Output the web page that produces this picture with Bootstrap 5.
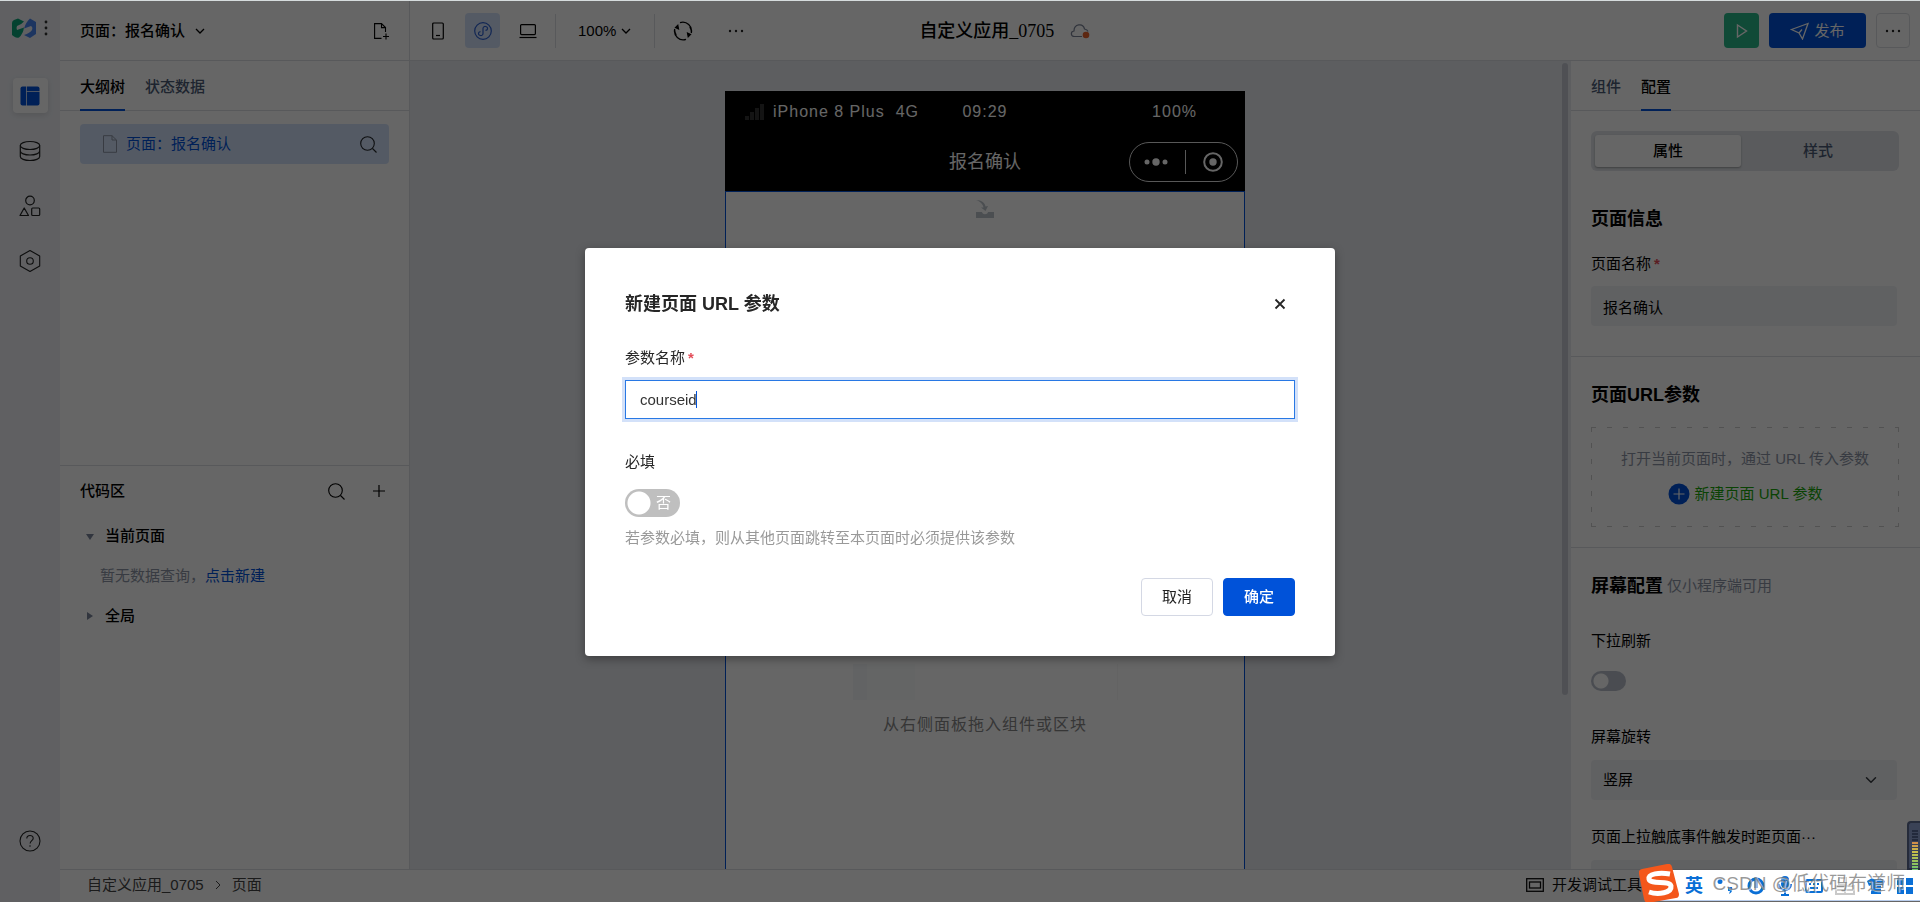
<!DOCTYPE html>
<html lang="zh-CN">
<head>
<meta charset="utf-8">
<meta name="viewport" content="width=device-width, initial-scale=1">
<title>自定义应用_0705</title>
<link href="https://cdn.jsdelivr.net/npm/bootstrap@5.3.0/dist/css/bootstrap.min.css" rel="stylesheet">
<style>
  :root { --brand:#0052d9; --line:#dcdfe4; --canvas:#e9ecf0; --tint:#d3e2fa; --muted:#8d95a5; --slate:#4b5b76; }
  body { font-family:"Liberation Sans","Noto Sans CJK SC",sans-serif; font-size:15px; line-height:20px; color:#000; background:#fff; border-top:1px solid #d6dcdd; overflow:hidden; }
  svg { display:block; fill:none; flex:none; }
  svg:not([stroke]) { stroke:currentColor; }
  a { color:var(--brand); text-decoration:none; }
  .plain { border:0; background:none; padding:0; color:inherit; display:flex; align-items:center; }
  .edge-b { border-bottom:1px solid var(--line); }
  .app-rail { width:60px; background:#eff1f6; color:#222; }
  .rail-tile { width:35px; height:35px; border-radius:4px; justify-content:center; }
  .rail-tile.on { background:#fff; box-shadow:0 2px 6px rgba(0,0,0,.12); color:var(--brand); }
  .rail-gap { gap:20px; margin-top:39px; }
  .rail-help { margin-bottom:45px; }
  .top-bar { height:60px; }
  .tools { padding-left:10px; gap:10px; }
  .zoom-pick { margin:0 12px; }
  .side-left { width:350px; border-right:1px solid var(--line); }
  .side-right { width:349px; background:#fff; }
  .px-20 { padding-left:20px; padding-right:20px; }
  .side-right .px-20 { padding-right:21px; }
  .tab-bar { height:50px; gap:20px; }
  .tab-bar button { height:50px; color:var(--slate); border-bottom:2px solid transparent; font-weight:500; padding-top:3px; }
  .tab-bar button.on { color:#000; border-color:var(--brand); }
  .tree-row { margin:13px 20px 0; height:40px; background:var(--tint); border-radius:4px; padding:0 12px 0 22px; color:var(--brand); }
  .outline { height:404px; }
  .code-head { height:50px; }
  .code-line { height:40px; padding-left:26px; }
  .code-line svg { margin-right:11px; }
  .code-empty { height:40px; padding-left:40px; color:var(--muted); }
  .icon-btn { width:35px; height:35px; border-radius:4px; justify-content:center; border:0; background:none; display:flex; align-items:center; padding:0; }
  .mini-btn { background:var(--tint); color:#2b5fd0; }
  .run-btn { background:#28b98a; color:#fff; }
  .pub-set { gap:10px; margin-right:10px; }
  .pub-btn { width:97px; background:var(--brand); color:#fff; }
  .more-btn { width:34px; border:1px solid var(--line); }
  .vline { width:1px; height:34px; background:var(--line); }
  .app-title { font-family:"Liberation Serif","Noto Sans CJK SC",serif; font-size:18px; font-weight:500; margin-left:156px; }
  .work { background:var(--canvas); }
  .device { width:520px; background:#fff; margin-top:30px; }
  .device-head { background:#000; height:100px; color:#fff; }
  .device-title { font-size:18px; line-height:58px; }
  .status-row { font-size:16px; letter-spacing:1px; height:42px; padding:0 20px; display:grid; grid-template-columns:1fr auto 1fr; align-items:center; }
  .status-row .power { padding-right:28px; }
  .capsule { width:109px; height:40px; border:1px solid #ddd; border-radius:20px; right:7px; top:9px; gap:17px; }
  .device-body { border:1px solid var(--brand); border-bottom:0; color:#888; }
  .ghost { width:265px; height:36px; margin-top:446px; background:linear-gradient(90deg,#f5f8fb 0 14px,#fbfcfd 14px 62px,#fefefe 62px); border-right:1px solid #f8f8f8; }
  .hint { letter-spacing:1px; font-size:16px; margin-top:15px; }
  .rail-scroll { width:11px; padding:2px 0 0 2px; }
  .rail-thumb { width:6px; height:632px; background:#c6c9d3; border-radius:3px; }
  .seg { height:40px; background:#e0e3e8; border-radius:6px; padding:4px; margin-top:20px; }
  .seg button { flex:1; border:0; background:none; border-radius:3px; color:var(--slate); font-weight:500; }
  .seg button.on { flex:0 0 146px; background:#fff; color:#000; box-shadow:0 1px 2px rgba(0,0,0,.3); }
  h2 { font-size:18px; line-height:24px; font-weight:700; margin:0; }
  .soft-field { display:block; height:40px; width:calc(100% - 2px); border:0; border-radius:4px; background-color:#f1f3f6; padding:0 12px; color:#000; font-size:15px; }
  .arrow-sel { background-size:12px; background-position:right 20px center; }
  .star { color:#e34d59; font-weight:700; padding-left:3px; }
  .soft-text { color:var(--muted); }
  .sec-a { padding-bottom:30px; } .sec-b { padding-top:26px; padding-bottom:20px; } .sec-c { padding-top:26px; }
  .sec-a h2 { margin-top:36px; } .sec-a label { margin:23px 0 12px; display:block; }
  .sec-c label { display:block; margin-bottom:13px; }
  .sec-c .pull-label { margin:33px 0 20px; }
  .rot-label { margin-top:36px; }
  .dist-label { margin-top:27px; }
  .dash-box { height:100px; margin-top:20px; padding-top:22px; color:var(--muted);
    background:repeating-linear-gradient(90deg,#ccc 0 5px,transparent 5px 16px) 0 0/100% 1px no-repeat,
      repeating-linear-gradient(90deg,#ccc 0 5px,transparent 5px 16px) 0 100%/100% 1px no-repeat,
      repeating-linear-gradient(180deg,#ccc 0 5px,transparent 5px 16px) 0 0/1px 100% no-repeat,
      repeating-linear-gradient(180deg,#ccc 0 5px,transparent 5px 16px) 100% 0/1px 100% no-repeat; }
  .add-link { color:#1aa70a; margin-top:14px; gap:5px; }
  .knob { appearance:none; margin:0; display:block; width:35px; height:20px; border-radius:10px; background:radial-gradient(circle at 10px 10px,#fff 7px,transparent 8px) #b9bfcb; }
  .knob.wide { width:55px; height:28px; border-radius:14px; background:radial-gradient(circle at 14px 14px,#fff 11px,transparent 12px) #bfbfbf; }
  .knob-text { position:absolute; left:31px; top:4px; color:#fff; }
  .foot { height:34px; border-top:1px solid var(--line); color:#444; padding:0 0 3px 27px; }
  .dev-tool { margin-right:278px; color:#111; }
  .modal-backdrop.veil { top:1px; opacity:.6; }
  .modal.ask { top:1px; pointer-events:none; }
  .ask .modal-dialog { max-width:750px; margin-top:0; margin-bottom:0; min-height:100%; }
  .ask .modal-content { border:0; border-radius:4px; padding:44px 40px 40px; box-shadow:0 3px 10px rgba(0,0,0,.35); color:#262626; }
  .arg-label { margin:32px 0 12px; }
  .must-label { margin:33px 0 17px; }
  .tip { color:#999; margin-top:11px; }
  .acts { gap:10px; margin-top:30px; }
  .name-field { height:39px; border:1px solid #2878e4; border-radius:0; box-shadow:0 0 0 3px #d3e1f9; padding:0 14px; font-size:15px; color:#333; background:#fff; }
  .caret { position:absolute; left:71px; top:11px; width:1px; height:17px; background:var(--brand); }
  .dlg-btn { width:72px; height:38px; font-size:15px; border-radius:4px; padding:0; line-height:20px; }
  .dlg-btn.cancel { border-color:#d4d8e4; color:#222; background:#fff; }
  .dlg-btn.ok { background:var(--brand); border-color:var(--brand); color:#fff; font-weight:500; }
  .ime { position:fixed; right:0; bottom:0; height:34px; width:284px; z-index:1070; }
  .ime-strip { position:absolute; left:20px; right:0; bottom:1px; height:31px; background:#fff; border-bottom:1px solid #b9cdec; color:#0a6fd6; padding:2px 7px 0 29px; }
  .ime-mode { font-size:18px; }
  .ime-logo { position:absolute; left:3px; bottom:-1px; }
  .wm { position:absolute; right:15px; bottom:8px; font-size:19px; color:rgba(120,120,120,.75); text-shadow:1px 1px 0 rgba(255,255,255,.6); white-space:nowrap; }
  .meter-box { position:fixed; right:0; bottom:32px; width:13px; height:49px; z-index:1060; background:#3a4256; border:2px solid #252b3a; border-right:0; border-radius:4px 0 0 0; padding:7px 2px 0 3px; }
  .meter-bar { height:40px; background:repeating-linear-gradient(180deg,transparent 0 2px,#3a4256 2px 3px),linear-gradient(180deg,#232a3c 0 12px,#d08a4a 12px,#c9c04a 22px,#6fc46a 40px); }
</style>
</head>
<body>
<div class="d-flex vh-100">
  <nav class="app-rail d-flex flex-column align-items-center flex-shrink-0">
    <div class="d-flex align-items-center gap-2 mt-3">
      <svg width="24" height="22" viewBox="0 0 24 22" stroke="none"><path fill="#0ca678" d="M0 6Q0 4 2 3L6 1.500 12 4.500Q9 8 5 9Q4 11 5 13L12 10.500Q11 17 7 20.500Q5 21.500 2 19.500L0 18Z"/><path fill="#4a86f0" d="M18 1.500 24 5V17L18 21 12 18Q18 16 20 13Q21 10 19 9L12 11.500Q14 5 18 1.500Z"/></svg>
      <svg width="4" height="16" viewBox="0 0 4 16" stroke="none"><g fill="#333"><circle cx="2" cy="2" r="1.400"/><circle cx="2" cy="8" r="1.400"/><circle cx="2" cy="14" r="1.400"/></g></svg>
    </div>
    <div class="rail-gap d-flex flex-column">
      <button class="plain rail-tile on" aria-label="布局"><svg width="20" height="20" viewBox="0 0 20 20"><rect x=".5" y=".5" width="19" height="19" rx="2" fill="currentColor" stroke="none"/><path d="M6.500 0v20M6.500 5.500H20" stroke="#fff" stroke-opacity=".75"/></svg></button>
      <button class="plain rail-tile" aria-label="数据"><svg width="22" height="22" viewBox="0 0 22 22" stroke-width="1.200"><ellipse cx="11" cy="5.500" rx="9.700" ry="4"/><path d="M1.300 5.500v11c0 2.300 4.300 4 9.700 4s9.700-1.700 9.700-4v-11M1.300 11c0 2.300 4.300 4 9.700 4s9.700-1.700 9.700-4"/></svg></button>
      <button class="plain rail-tile" aria-label="资源"><svg width="22" height="22" viewBox="0 0 22 22" stroke-width="1.200"><circle cx="11" cy="5.500" r="4.300"/><path d="M5.200 13 9.500 20.500H1Z" stroke-linejoin="round"/><rect x="12.700" y="13" width="8" height="7.500" rx="1"/></svg></button>
      <button class="plain rail-tile" aria-label="设置"><svg width="22" height="24" viewBox="0 0 22 24" stroke-width="1.100"><path d="M11 1.500 20.700 7v10L11 22.500 1.300 17V7Z" stroke-linejoin="round"/><circle cx="11" cy="12" r="3.300"/></svg></button>
    </div>
    <button class="plain rail-tile rail-help mt-auto" aria-label="帮助"><svg width="22" height="22" viewBox="0 0 22 22" stroke-width="1.100"><circle cx="11" cy="11" r="10"/><path d="M7.800 8.500c0-4 6.400-4 6.400-.3 0 2.300-3.100 2.600-3.100 5.300M11 15.200v1.600"/></svg></button>
  </nav>

  <div class="d-flex flex-column flex-grow-1 overflow-hidden">
    <header class="top-bar edge-b d-flex flex-shrink-0">
      <div class="side-left d-flex align-items-center flex-shrink-0 px-20">
        <button class="plain fw-medium">页面：报名确认<svg class="ms-2" width="14" height="10" viewBox="0 0 14 10" stroke-width="1.300"><path d="m3 3 4 4 4-4"/></svg></button>
        <button class="plain ms-auto" aria-label="新建页面"><svg width="16" height="18" viewBox="0 0 16 18" stroke-width="1.100"><path d="M8.500 16.400H1.600V1.600H8.500L12.500 5.600V10M8.500 1.600V5.600H12.500M10 14.500h6M13 11.500v6"/></svg></button>
      </div>
      <div class="tools d-flex align-items-center flex-grow-1">
        <button class="icon-btn" aria-label="手机"><svg width="12" height="18" viewBox="0 0 12 18" stroke-width="1.200"><rect x=".7" y="1" width="10.600" height="16" rx="1"/><path d="M4 13.500h4"/></svg></button>
        <button class="icon-btn mini-btn" aria-label="小程序"><svg width="18" height="18" viewBox="0 0 18 18" stroke-width="1.200"><circle cx="9" cy="9" r="8.300"/><path d="M9 11.500V6.500c0-3 5-2.500 4.500.3-.2 1.200-1.200 1.500-2 1.600M9 6.500v5c0 3-5 2.500-4.500-.3.2-1.200 1.200-1.500 2-1.600"/></svg></button>
        <button class="icon-btn" aria-label="电脑"><svg width="18" height="16" viewBox="0 0 18 16" stroke-width="1.200"><rect x="1.600" y="1.600" width="14.800" height="10" rx="1"/><path d="M.5 14.500h17"/></svg></button>
        <span class="vline"></span>
        <button class="plain zoom-pick">100%<svg class="ms-1" width="12" height="10" viewBox="0 0 12 10" stroke-width="1.300"><path d="m2 3 4 4 4-4"/></svg></button>
        <span class="vline"></span>
        <button class="icon-btn me-2" aria-label="刷新"><svg width="20" height="20" viewBox="0 0 20 20" stroke-width="1.200"><path d="M7 1.600A8.800 8.800 0 0 1 18.300 12M13 18.400A8.800 8.800 0 0 1 1.700 8M1.700 8C1.500 10.500 2.200 12.300 3.200 14M18.300 12C18.500 9.500 17.800 7.700 16.800 6"/><path fill="currentColor" d="M4.800 4.200 5.500 8 2.500 6.500ZM15.200 15.800 14.500 12 17.500 13.500Z"/></svg></button>
        <button class="icon-btn" aria-label="更多"><svg width="18" height="4" viewBox="0 0 18 4" stroke="none"><g fill="#222"><circle cx="3" cy="2" r="1.200"/><circle cx="9" cy="2" r="1.200"/><circle cx="15" cy="2" r="1.200"/></g></svg></button>
        <div class="app-title d-flex align-items-center">自定义应用_0705
          <svg class="ms-3" width="20" height="16" viewBox="0 0 20 16"><path stroke="#7a8296" stroke-width="1.200" d="M12 13.500H4.500C.5 13.500.3 8.500 4 8c0-7 9-8.500 10.500-2 2 .3 3 1 3.500 2.500"/><circle cx="16" cy="12" r="3.300" fill="#e8622c" stroke="none"/></svg>
        </div>
        <div class="d-flex align-items-center pub-set ms-auto">
          <button class="icon-btn run-btn" aria-label="预览"><svg width="12" height="16" viewBox="0 0 12 16" stroke-width="1.400"><path d="M1.500 2v12L10.500 8Z"/></svg></button>
          <button class="icon-btn pub-btn"><svg class="me-1" width="20" height="18" viewBox="0 0 20 18" stroke-width="1.300"><path d="M1.500 7.500 18 1.500 12.500 17 9 11 1.500 7.500ZM9 11l3-3.500"/></svg>发布</button>
          <button class="icon-btn more-btn" aria-label="更多操作"><svg width="18" height="4" viewBox="0 0 18 4" stroke="none"><g fill="#222"><circle cx="3" cy="2" r="1.200"/><circle cx="9" cy="2" r="1.200"/><circle cx="15" cy="2" r="1.200"/></g></svg></button>
        </div>
      </div>
    </header>

    <div class="d-flex flex-grow-1 overflow-hidden">
      <aside class="side-left flex-shrink-0">
        <div class="outline">
          <div class="tab-bar edge-b d-flex px-20"><button class="plain on">大纲树</button><button class="plain">状态数据</button></div>
          <div class="tree-row d-flex align-items-center">
            <svg class="me-2 soft-text" width="16" height="18" viewBox="0 0 16 18"><path d="M1.500.7H10L14.500 5V17.300H1.500ZM10 .7V5h4.500"/></svg>页面：报名确认
            <svg class="ms-auto text-dark" width="17" height="17" viewBox="0 0 17 17" stroke-width="1.100"><circle cx="7.500" cy="7.500" r="6.800"/><path d="m12.500 12.500 4 4"/></svg>
          </div>
        </div>
        <div class="edge-b"></div>
        <div class="code-head px-20 d-flex align-items-center">
          <span class="fw-medium">代码区</span>
          <button class="plain ms-auto me-1" aria-label="搜索"><svg width="17" height="17" viewBox="0 0 17 17" stroke-width="1.100"><circle cx="7.500" cy="7.500" r="6.800"/><path d="m12.500 12.500 4 4"/></svg></button>
          <button class="plain ms-4 me-1" aria-label="新增"><svg width="12" height="12" viewBox="0 0 12 12" stroke-width="1.200"><path d="M0 6h12M6 0v12"/></svg></button>
        </div>
        <div class="code-line d-flex align-items-center"><svg width="8" height="8" viewBox="0 0 8 8" stroke="none"><path fill="#7a869c" d="M0 2h8L4 8z"/></svg><span class="fw-medium">当前页面</span></div>
        <div class="code-empty d-flex align-items-center">暂无数据查询，<a href="#">点击新建</a></div>
        <div class="code-line d-flex align-items-center"><svg width="8" height="8" viewBox="0 0 8 8" stroke="none"><path fill="#7a869c" d="M1 0v8L7 4z"/></svg><span class="fw-medium">全局</span></div>
      </aside>

      <main class="work flex-grow-1 d-flex overflow-hidden">
        <div class="device mx-auto d-flex flex-column">
          <div class="device-head">
            <div class="status-row">
              <span class="d-flex align-items-center"><svg class="me-2" width="20" height="16" viewBox="0 0 20 16" stroke="none"><path fill="#333" d="M0 12h4v4H0zM5 8h4v8H5zM10 4h4v12h-4zM15 0h4v16h-4z"/></svg>iPhone 8 Plus &nbsp;4G</span>
              <span>09:29</span><span class="text-end power">100%</span>
            </div>
            <div class="position-relative text-center device-title">报名确认
              <div class="capsule position-absolute d-flex align-items-center justify-content-center">
                <svg width="24" height="10" viewBox="0 0 24 10" stroke="none"><g fill="#fff"><circle cx="3" cy="5" r="2.500"/><circle cx="12" cy="5" r="3.700"/><circle cx="21" cy="5" r="2.500"/></g></svg>
                <svg width="1" height="24" viewBox="0 0 1 24"><path stroke="#ddd" d="M.5 0v24"/></svg>
                <svg width="20" height="20" viewBox="0 0 20 20"><circle cx="10" cy="10" r="8.800" stroke="#fff" stroke-width="2"/><circle cx="10" cy="10" r="3.700" fill="#fff" stroke="none"/></svg>
              </div>
            </div>
          </div>
          <div class="device-body flex-grow-1 d-flex flex-column align-items-center">
            <svg class="mt-2" width="18" height="18" viewBox="0 0 18 18" stroke="none"><path fill="#bcc4cb" d="M0 0c6 0 9 3 9.500 6.500L12 6l-2.500 5L5 7.500h2.500C7 4 4 1.500 0 0ZM0 12h6c.5 3 5.500 3 6 0h6v6H0Z"/></svg>
            <div class="ghost"></div>
            <div class="hint">从右侧面板拖入组件或区块</div>
          </div>
        </div>
        <div class="rail-scroll flex-shrink-0"><div class="rail-thumb"></div></div>
      </main>

      <aside class="side-right flex-shrink-0 overflow-hidden">
        <div class="tab-bar edge-b d-flex px-20"><button class="plain">组件</button><button class="plain on">配置</button></div>
        <section class="px-20 sec-a edge-b">
          <div class="seg d-flex"><button class="on">属性</button><button>样式</button></div>
          <h2>页面信息</h2>
          <label for="pname">页面名称<span class="star">*</span></label>
          <input id="pname" class="soft-field" value="报名确认">
        </section>
        <section class="px-20 sec-b edge-b">
          <h2>页面URL参数</h2>
          <div class="dash-box text-center">打开当前页面时，通过 URL 传入参数
            <button class="plain add-link mx-auto"><svg width="22" height="22" viewBox="0 0 22 22"><circle cx="11" cy="11" r="10.500" fill="#0052d9" stroke="none"/><path stroke="#fff" stroke-width="1.200" d="M5.500 11h11M11 5.500v11"/></svg>新建页面 URL 参数</button>
          </div>
        </section>
        <section class="px-20 sec-c">
          <div class="d-flex align-items-center"><h2>屏幕配置</h2><span class="ms-1 soft-text">仅小程序端可用</span></div>
          <label for="pull" class="pull-label">下拉刷新</label>
          <input id="pull" type="checkbox" role="switch" class="knob">
          <label for="rot" class="rot-label">屏幕旋转</label>
          <select id="rot" class="soft-field form-select arrow-sel"><option>竖屏</option></select>
          <label for="dist" class="dist-label">页面上拉触底事件触发时距页面···</label>
          <input id="dist" class="soft-field">
        </section>
      </aside>
    </div>

    <footer class="foot d-flex align-items-center flex-shrink-0">
      自定义应用_0705<svg class="mx-2" width="12" height="12" viewBox="0 0 12 12"><path d="m4 2 4 4-4 4"/></svg>页面
      <span class="ms-auto d-flex align-items-center dev-tool"><svg class="me-2" width="18" height="14" viewBox="0 0 18 14" stroke-width="1.300"><rect x=".7" y=".7" width="16.600" height="12.600"/><rect x="3.500" y="4" width="11" height="6"/></svg>开发调试工具</span>
    </footer>
  </div>
</div>

<div class="modal-backdrop veil show"></div>
<div class="modal ask show d-block" role="dialog" aria-labelledby="dlg">
  <div class="modal-dialog modal-dialog-centered">
    <div class="modal-content">
      <div class="d-flex align-items-center justify-content-between">
        <h2 id="dlg">新建页面 URL 参数</h2>
        <button class="plain me-2" aria-label="关闭"><svg width="14" height="14" viewBox="0 0 14 14" stroke-width="1.800"><path d="m2.500 2.500 9 9m0-9-9 9"/></svg></button>
      </div>
      <label for="arg" class="arg-label">参数名称<span class="star">*</span></label>
      <div class="position-relative"><input id="arg" class="form-control name-field" value="courseid"><span class="caret"></span></div>
      <label for="must" class="must-label">必填</label>
      <div class="position-relative"><input id="must" type="checkbox" role="switch" class="knob wide"><span class="knob-text">否</span></div>
      <div class="tip">若参数必填，则从其他页面跳转至本页面时必须提供该参数</div>
      <div class="d-flex justify-content-end acts"><button class="btn dlg-btn cancel">取消</button><button class="btn dlg-btn ok">确定</button></div>
    </div>
  </div>
</div>

<div class="meter-box"><div class="meter-bar"></div></div>
<div class="ime">
  <div class="ime-strip d-flex align-items-center justify-content-between">
    <b class="ime-mode">英</b>
    <svg width="20" height="18" viewBox="0 0 20 18" stroke="none"><path fill="currentColor" d="M5 2a2 2 0 1 1 0 5 2 2 0 0 1 0-5M13 10h4c1 4-1 6-3 7l1-3h-2z"/></svg>
    <svg width="18" height="18" viewBox="0 0 18 18" stroke-width="3"><circle cx="9" cy="9" r="7"/><path d="M9 3v8"/></svg>
    <svg width="16" height="20" viewBox="0 0 16 20" stroke-width="2"><rect x="5" y="1" width="6" height="10" rx="3" fill="currentColor"/><path d="M2 8c0 8 12 8 12 0M8 14v5M4 19h8"/></svg>
    <svg width="18" height="14" viewBox="0 0 18 14" stroke-width="2"><rect x="1" y="1" width="16" height="12" rx="1"/><path d="M4 5h2m2 0h2m2 0h2M5 9h8"/></svg>
    <svg width="20" height="18" viewBox="0 0 20 18" stroke="#c9c9c9" stroke-width="2"><path d="M4 1h7v7H4zM1 9h18v8H1zM10 9v8M1 13h18"/></svg>
    <svg width="18" height="18" viewBox="0 0 18 18" stroke="none"><path fill="currentColor" d="m0 4 5-3q4 3 8 0l5 3-2 5-2-1v9H4V8L2 9Z"/></svg>
    <svg width="16" height="16" viewBox="0 0 16 16" stroke="none"><path fill="currentColor" d="M0 0h7v7H0zM9 0h7v7H9zM0 9h7v7H0zM9 9h7v7H9z"/></svg>
  </div>
  <svg class="ime-logo" width="40" height="39" viewBox="0 0 40 39" stroke="none"><path fill="#f4571b" d="M0 10Q-1 6 3 5L28 0q4-1 5 3l7 27q0 4-3 4L9 39q-3 0-4-4Z"/><path stroke="#fff" stroke-width="5" d="M31 10C20 8 9 10 10 15c1 6 21 1 22 7 1 7-13 9-22 6"/></svg>
  <div class="wm">CSDN @低代码布道师</div>
</div>
<script src="https://cdn.jsdelivr.net/npm/bootstrap@5.3.0/dist/js/bootstrap.bundle.min.js"></script>
</body>
</html>
